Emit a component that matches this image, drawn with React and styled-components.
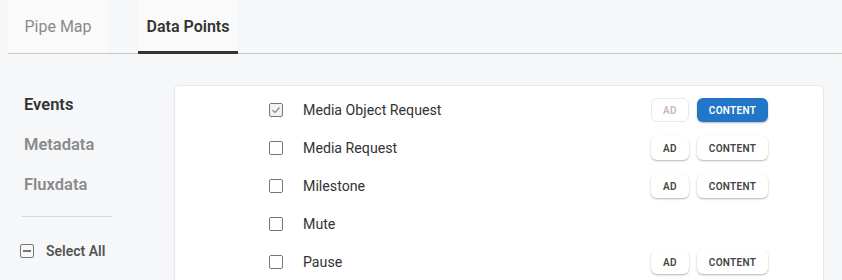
import React from 'react';
import styled, { createGlobalStyle } from 'styled-components';

const GlobalStyle = createGlobalStyle`
  body {
    margin: 0;
    background: #f6f7f9;
    font-family: Roboto, "Liberation Sans", sans-serif;
    color: #333;
  }
`;

const Page = styled.div`
  width: 842px;
  height: 280px;
  overflow: hidden;
`;

const TabBar = styled.div`
  display: flex;
  gap: 30px;
  margin-left: 8px;
  height: 53px;
  border-bottom: 1px solid #c6c6c6;
`;

const Tab = styled.div`
  position: relative;
  width: 100px;
  display: flex;
  align-items: center;
  justify-content: center;
  padding-bottom: 1px;
  box-sizing: border-box;
  font-size: 16px;
  font-weight: ${p => (p.$active ? 600 : 400)};
  color: ${p => (p.$active ? '#333' : '#8a8a8a')};
  background: #fafafa;

  &::after {
    content: '';
    display: ${p => (p.$active ? 'block' : 'none')};
    position: absolute;
    left: 0;
    right: 0;
    bottom: -1px;
    height: 3px;
    background: #333;
  }
`;

const Body = styled.div`
  display: flex;
  padding-top: 32px;
`;

const Sidebar = styled.div`
  width: 167px;
  padding-left: 8px;
  box-sizing: content-box;
`;

const NavItem = styled.div`
  height: 40px;
  display: flex;
  align-items: center;
  padding-left: 16px;
  margin-top: ${p => (p.$first ? '-2px' : '0')};
  font-size: 16.5px;
  font-weight: 600;
  color: ${p => (p.$active ? '#333' : '#8a8a8a')};
`;

const Divider = styled.div`
  width: 90px;
  height: 1px;
  background: #d6d6d6;
  margin: 12px 0 0 14px;
`;

const SelectAll = styled.div`
  display: flex;
  align-items: center;
  gap: 12px;
  margin-top: 26px;
  padding-left: 12px;
  font-size: 14px;
  font-weight: 600;
  color: #555;
`;

const MinusBox = styled.span`
  width: 12px;
  height: 12px;
  border: 1.5px solid #777;
  border-radius: 2px;
  display: flex;
  align-items: center;
  justify-content: center;

  &::before {
    content: '';
    width: 8px;
    height: 1.5px;
    background: #777;
  }
`;

const Card = styled.div`
  width: 648px;
  height: 220px;
  background: #fff;
  border-radius: 4px;
  box-shadow: 0 0 2px rgba(0, 0, 0, 0.18), 0 1px 2px rgba(0, 0, 0, 0.08);
  padding-top: 5px;
  box-sizing: border-box;
`;

const Row = styled.div`
  height: 38px;
  display: flex;
  align-items: center;
  padding-left: 94px;
  padding-right: 55px;
`;

const Check = styled.span`
  width: 12px;
  height: 12px;
  border: 1.5px solid #777;
  border-radius: 2px;
  background: ${p => (p.$checked ? '#f2f2f2' : '#fff')};
  display: flex;
  align-items: center;
  justify-content: center;
  flex-shrink: 0;
  svg {
    display: block;
  }
`;

const Label = styled.span`
  margin-left: 20px;
  font-size: 14.2px;
  color: #333;
  flex: 1;
`;

const Buttons = styled.div`
  display: flex;
  gap: 8px;
`;

const Pill = styled.button`
  height: 24px;
  width: ${p => p.$w}px;
  border-radius: 6px;
  font-family: Roboto, "Liberation Sans", sans-serif;
  font-size: 10px;
  font-weight: 600;
  letter-spacing: 0.3px;
  padding: 0;
  border: ${p => (p.$disabled ? '1px solid #e8e8e8' : 'none')};
  background: ${p => (p.$selected ? '#2176c7' : '#fff')};
  color: ${p => (p.$selected ? '#fff' : p.$disabled ? '#c9b6b6' : '#444')};
  box-shadow: ${p => (p.$disabled ? 'none' : '0 1px 2px rgba(0,0,0,0.3)')};
`;

const rows = [
  { label: 'Media Object Request', checked: true, buttons: true, first: true },
  { label: 'Media Request', buttons: true },
  { label: 'Milestone', buttons: true },
  { label: 'Mute', buttons: false },
  { label: 'Pause', buttons: true },
];

const CheckMark = () => (
  <svg width="10" height="10" viewBox="0 0 10 10">
    <path d="M1.5 5.2 L4 7.5 L8.5 2.5" fill="none" stroke="#888" strokeWidth="1.2" />
  </svg>
);

export default function App() {
  return (
    <Page>
      <GlobalStyle />
      <TabBar>
        <Tab>Pipe Map</Tab>
        <Tab $active>Data Points</Tab>
      </TabBar>
      <Body>
        <Sidebar>
          <NavItem $active $first>Events</NavItem>
          <NavItem>Metadata</NavItem>
          <NavItem>Fluxdata</NavItem>
          <Divider />
          <SelectAll>
            <MinusBox />
            Select All
          </SelectAll>
        </Sidebar>
        <Card>
          {rows.map(r => (
            <Row key={r.label}>
              <Check $checked={r.checked}>{r.checked && <CheckMark />}</Check>
              <Label>{r.label}</Label>
              {r.buttons && (
                <Buttons>
                  <Pill $w={38} $disabled={r.first}>AD</Pill>
                  <Pill $w={71} $selected={r.first}>CONTENT</Pill>
                </Buttons>
              )}
            </Row>
          ))}
        </Card>
      </Body>
    </Page>
  );
}
